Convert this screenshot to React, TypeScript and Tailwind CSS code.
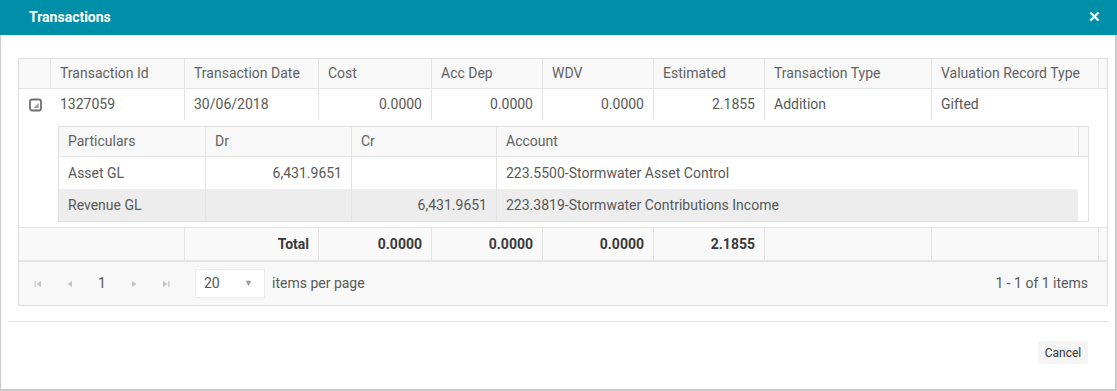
import React from "react";

const COLS = [32, 134, 134, 113, 111, 111, 111, 167, 167];
const HEAD = ["", "Transaction Id", "Transaction Date", "Cost", "Acc Dep", "WDV", "Estimated", "Transaction Type", "Valuation Record Type"];

function ExpandIcon() {
  return (
    <svg width="13" height="14" viewBox="0 0 13 14">
      <rect x="1" y="1.5" width="11" height="11" rx="2.2" fill="none" stroke="#707070" strokeWidth="1.8" />
      <polygon points="9.6,5 9.6,10 4.6,10" fill="#9c9c9c" />
    </svg>
  );
}

function PagerIcon({ kind }: { kind: "first" | "prev" | "next" | "last" }) {
  return (
    <svg width="8" height="8" viewBox="0 0 8 8" className="text-[#c4c4c4]">
      {kind === "first" && (
        <>
          <rect x="0.5" y="1" width="1.2" height="6" fill="currentColor" />
          <polygon points="7,1 7,7 2.5,4" fill="currentColor" />
        </>
      )}
      {kind === "prev" && <polygon points="6,1 6,7 1.5,4" fill="currentColor" />}
      {kind === "next" && <polygon points="2,1 2,7 6.5,4" fill="currentColor" />}
      {kind === "last" && (
        <>
          <polygon points="1,1 1,7 5.5,4" fill="currentColor" />
          <rect x="6.3" y="1" width="1.2" height="6" fill="currentColor" />
        </>
      )}
    </svg>
  );
}

export default function App() {
  return (
    <div className="w-[1117px] h-[391px] flex flex-col bg-white font-['Roboto',sans-serif] text-[14px] text-[#585858]">
      {/* Title bar */}
      <div className="h-[35px] shrink-0 bg-[#008fa9] flex items-center justify-between pl-[29px] pr-[16px]">
        <span className="text-white font-bold text-[14px]">Transactions</span>
        <span className="text-white font-bold text-[15px] leading-none">✕</span>
      </div>

      {/* Body */}
      <div className="flex-1 flex flex-col border-l border-r-2 border-b-2 border-[#cacaca]">
        <div className="mt-[23px] ml-[17px] w-[1090px] border border-[#dedede] flex flex-col">
          {/* Header */}
          <div className="flex h-[30px] bg-[#f8f8f8] border-b border-[#e4e4e4] text-[#626262]">
            {COLS.map((w, i) => (
              <div key={i} style={{ width: w }} className="shrink-0 border-r border-[#e4e4e4] px-[9px] flex items-center whitespace-nowrap">
                {HEAD[i]}
              </div>
            ))}
          </div>

          {/* Data row */}
          <div className="flex h-[31px]">
            <div className="w-[32px] shrink-0 flex items-center justify-center pt-[1px]">
              <ExpandIcon />
            </div>
            <div className="w-[134px] shrink-0 border-r border-[#e4e4e4] px-[9px] flex items-center">1327059</div>
            <div className="w-[134px] shrink-0 border-r border-[#e4e4e4] px-[9px] flex items-center">30/06/2018</div>
            <div className="w-[113px] shrink-0 border-r border-[#e4e4e4] px-[9px] flex items-center justify-end">0.0000</div>
            <div className="w-[111px] shrink-0 border-r border-[#e4e4e4] px-[9px] flex items-center justify-end">0.0000</div>
            <div className="w-[111px] shrink-0 border-r border-[#e4e4e4] px-[9px] flex items-center justify-end">0.0000</div>
            <div className="w-[111px] shrink-0 border-r border-[#e4e4e4] px-[9px] flex items-center justify-end">2.1855</div>
            <div className="w-[167px] shrink-0 border-r border-[#e4e4e4] px-[9px] flex items-center">Addition</div>
            <div className="w-[167px] shrink-0 px-[9px] flex items-center">Gifted</div>
          </div>

          {/* Detail row */}
          <div className="h-[107px] pl-[39px] pt-[6px]">
            <div className="w-[1031px] border border-[#e0e0e0] flex flex-col">
              <div className="flex h-[30px] bg-[#f8f8f8] border-b border-[#e4e4e4] text-[#626262]">
                <div className="w-[147px] shrink-0 border-r border-[#e4e4e4] px-[9px] flex items-center">Particulars</div>
                <div className="w-[146px] shrink-0 border-r border-[#e4e4e4] px-[9px] flex items-center">Dr</div>
                <div className="w-[145px] shrink-0 border-r border-[#e4e4e4] px-[9px] flex items-center">Cr</div>
                <div className="w-[582px] shrink-0 border-r border-[#e4e4e4] px-[9px] flex items-center">Account</div>
                <div className="flex-1" />
              </div>
              <div className="flex h-[32px]">
                <div className="w-[147px] shrink-0 border-r border-[#e4e4e4] px-[9px] flex items-center">Asset GL</div>
                <div className="w-[146px] shrink-0 border-r border-[#e4e4e4] px-[9px] flex items-center justify-end">6,431.9651</div>
                <div className="w-[145px] shrink-0 border-r border-[#e4e4e4] px-[9px] flex items-center justify-end" />
                <div className="w-[581px] shrink-0 px-[9px] flex items-center">223.5500-Stormwater Asset Control</div>
              </div>
              <div className="flex h-[32px]">
                <div className="w-[147px] shrink-0 bg-[#ededed] border-r border-[#e4e4e4] px-[9px] flex items-center">Revenue GL</div>
                <div className="w-[146px] shrink-0 bg-[#ededed] border-r border-[#e4e4e4] px-[9px] flex items-center justify-end" />
                <div className="w-[145px] shrink-0 bg-[#ededed] border-r border-[#e4e4e4] px-[9px] flex items-center justify-end">6,431.9651</div>
                <div className="w-[581px] shrink-0 bg-[#ededed] px-[9px] flex items-center whitespace-nowrap">223.3819-Stormwater Contributions Income</div>
              </div>
            </div>
          </div>

          {/* Footer totals */}
          <div className="flex h-[34px] bg-[#f9f9f9] border-t border-b border-[#e4e4e4] font-bold text-[#3a3a3a]">
            <div className="w-[166px] shrink-0 border-r border-[#e4e4e4]" />
            <div className="w-[134px] shrink-0 border-r border-[#e4e4e4] px-[9px] flex items-center justify-end">Total</div>
            <div className="w-[113px] shrink-0 border-r border-[#e4e4e4] px-[9px] flex items-center justify-end">0.0000</div>
            <div className="w-[111px] shrink-0 border-r border-[#e4e4e4] px-[9px] flex items-center justify-end">0.0000</div>
            <div className="w-[111px] shrink-0 border-r border-[#e4e4e4] px-[9px] flex items-center justify-end">0.0000</div>
            <div className="w-[111px] shrink-0 border-r border-[#e4e4e4] px-[9px] flex items-center justify-end">2.1855</div>
            <div className="w-[167px] shrink-0 border-r border-[#e4e4e4]" />
            <div className="w-[167px] shrink-0 border-r border-[#e4e4e4]" />
          </div>

          {/* Pager */}
          <div className="flex h-[44px] items-center bg-[#f8f8f8] border-t border-[#e4e4e4] pl-[3px] pr-[19px]">
            <div className="w-[32px] flex justify-center"><PagerIcon kind="first" /></div>
            <div className="w-[32px] flex justify-center"><PagerIcon kind="prev" /></div>
            <div className="w-[32px] flex justify-center text-[#555]">1</div>
            <div className="w-[32px] flex justify-center"><PagerIcon kind="next" /></div>
            <div className="w-[32px] flex justify-center"><PagerIcon kind="last" /></div>
            <div className="ml-[13px] w-[70px] h-[29px] bg-white border border-[#ececec] flex items-center justify-between pl-[8px] pr-[11px]">
              <span className="text-[#555]">20</span>
              <span className="text-[9px] text-[#999]">▼</span>
            </div>
            <span className="ml-[7px]">items per page</span>
            <span className="ml-auto">1 - 1 of 1 items</span>
          </div>
        </div>

        <div className="mt-[15px] ml-[7px] w-[1102px] h-px bg-[#e2e2e2]" />

        <div className="mt-[19px] flex justify-end pr-[27px]">
          <button className="w-[50px] h-[23px] bg-[#f5f5f5] text-[12px] text-[#333] flex items-center justify-center">Cancel</button>
        </div>
      </div>
    </div>
  );
}
